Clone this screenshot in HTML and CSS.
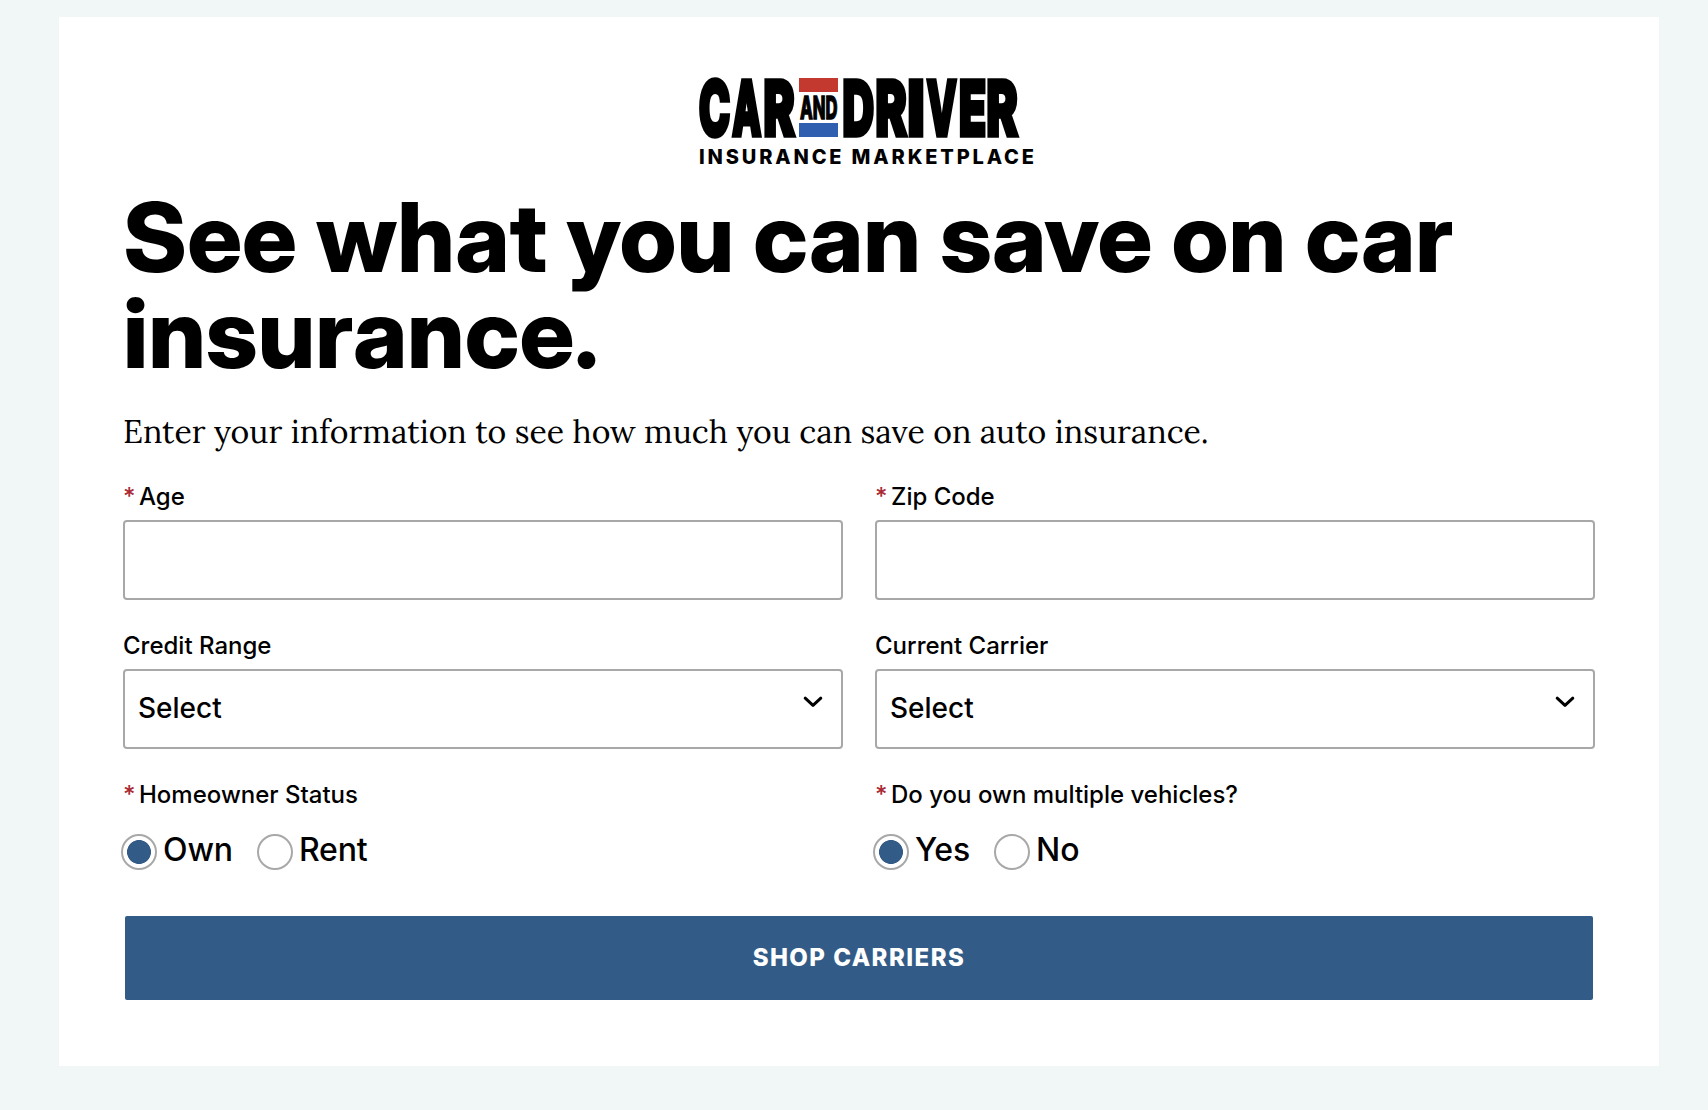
FILE: index.html
```html
<!DOCTYPE html>
<html lang="en">
<head>
<meta charset="utf-8">
<title>Car and Driver Insurance Marketplace</title>
<link rel="stylesheet" href="styles.css">
</head>
<body>
<main class="card">
  <svg class="logo" width="336" height="90" viewBox="0 0 336 90" role="img" aria-label="Car and Driver Insurance Marketplace">
    <g class="wordmark">
      <text x="0" y="57.500" textLength="31" lengthAdjust="spacingAndGlyphs">C</text>
      <text x="33.500" y="57.500" textLength="28.500" lengthAdjust="spacingAndGlyphs">A</text>
      <text x="64.500" y="57.500" textLength="31" lengthAdjust="spacingAndGlyphs">R</text>
      <text x="143.500" y="57.500" textLength="31.500" lengthAdjust="spacingAndGlyphs">D</text>
      <text x="176.500" y="57.500" textLength="31" lengthAdjust="spacingAndGlyphs">R</text>
      <text x="208.500" y="57.500" textLength="17" lengthAdjust="spacingAndGlyphs">I</text>
      <text x="228" y="57.500" textLength="29.500" lengthAdjust="spacingAndGlyphs">V</text>
      <text x="260" y="57.500" textLength="27" lengthAdjust="spacingAndGlyphs">E</text>
      <text x="287.500" y="57.500" textLength="31" lengthAdjust="spacingAndGlyphs">R</text>
    </g>
    <rect x="100" y="1" width="39" height="14" fill="#c4392f"/>
    <text class="and" x="101" y="42" textLength="37.500" lengthAdjust="spacingAndGlyphs">AND</text>
    <rect x="100" y="46" width="39" height="14" fill="#2f5fae"/>
    <text class="tagline" x="0" y="87" textLength="335">INSURANCE MARKETPLACE</text>
  </svg>
  <h1 class="title">See what you can save on car insurance.</h1>
  <p class="intro">Enter your information to see how much you can save on auto insurance.</p>
  <form class="form">
    <div class="field">
      <label class="label" for="age"><span class="req">*</span>Age</label>
      <input class="control" id="age" type="text">
    </div>
    <div class="field">
      <label class="label" for="zip"><span class="req">*</span>Zip Code</label>
      <input class="control" id="zip" type="text">
    </div>
    <div class="field">
      <span class="label">Credit Range</span>
      <div class="control select"><span>Select</span>
        <svg class="chevron" width="20" height="12" viewBox="0 0 20 12"><path d="M2.2 2.2 10 9.4 17.8 2.2"/></svg>
      </div>
    </div>
    <div class="field">
      <span class="label">Current Carrier</span>
      <div class="control select"><span>Select</span>
        <svg class="chevron" width="20" height="12" viewBox="0 0 20 12"><path d="M2.2 2.2 10 9.4 17.8 2.2"/></svg>
      </div>
    </div>
    <div class="field">
      <span class="label"><span class="req">*</span>Homeowner Status</span>
      <div class="options">
        <label class="option"><input class="radio" type="radio" name="home" checked><span>Own</span></label>
        <label class="option"><input class="radio" type="radio" name="home"><span>Rent</span></label>
      </div>
    </div>
    <div class="field">
      <span class="label"><span class="req">*</span>Do you own multiple vehicles?</span>
      <div class="options">
        <label class="option"><input class="radio" type="radio" name="multi" checked><span>Yes</span></label>
        <label class="option"><input class="radio" type="radio" name="multi"><span>No</span></label>
      </div>
    </div>
    <button class="submit" type="button">SHOP CARRIERS</button>
  </form>
</main>
</body>
</html>
```
FILE: styles.css
```css
* { box-sizing: border-box; }
body {
  margin: 0;
  padding: 17px 49px 44px 59px;
  background: #f1f7f7;
  color: #000;
  font-family: Inter, "Liberation Sans", sans-serif;
}
.card {
  display: flex;
  flex-direction: column;
  width: 1600px;
  height: 1049px;
  padding: 60px 64px 0;
  background: #fff;
}
.logo { display: block; margin-left: 576px; overflow: visible; }
.wordmark text {
  font-size: 74px;
  font-weight: 800;
  stroke: #000;
  stroke-width: 5.500px;
}
.and { font-size: 31px; font-weight: 800; stroke: #000; stroke-width: 1.400px; }
.tagline { font-size: 20px; font-weight: 800; }
.title {
  margin: 22px 0 0;
  font-family: "Inter Display", Inter, sans-serif;
  font-size: 96px;
  line-height: 96px;
  font-weight: 800;
}
.intro {
  margin: 31px 0 0;
  font-family: Lora, "Liberation Serif", serif;
  font-size: 32px;
  line-height: 40px;
  white-space: nowrap;
}
.form {
  display: grid;
  grid-template-columns: 1fr 1fr;
  column-gap: 32px;
  margin-top: 30px;
}
.field { height: 149px; }
.label {
  display: block;
  margin-bottom: 9px;
  font-size: 24px;
  line-height: 29px;
  font-weight: 500;
}
.req { display: inline-block; width: 16px; color: #a92a34; }
.control {
  display: block;
  width: 100%;
  height: 80px;
  border: 2px solid #a8a8a8;
  border-radius: 4px;
  background: #fff;
}
.select {
  display: flex;
  justify-content: space-between;
  padding: 20px 18px 0 13px;
  font-size: 28px;
  line-height: 34px;
  font-weight: 500;
}
.chevron { margin-top: 5px; fill: none; stroke: #000; stroke-width: 3px; stroke-linecap: round; stroke-linejoin: round; }
.options { display: flex; gap: 24px; margin: 25px 0 0 -2px; }
.option {
  display: flex;
  gap: 6px;
  font-size: 32px;
  line-height: 32px;
  font-weight: 500;
  letter-spacing: -.15px;
}
.radio {
  appearance: none;
  width: 36px;
  height: 36px;
  margin: 0;
  border: 2px solid #a8a8a8;
  border-radius: 50%;
  background: #fff;
}
.radio:checked { background: radial-gradient(circle, #325c87 11.6px, #fff 12.3px); }
.submit {
  grid-column: 1 / -1;
  height: 84px;
  margin: -13px 2px 0;
  padding: 0 0 2px;
  border: 0;
  border-radius: 2px;
  background: #325c87;
  color: #fff;
  font: 800 24px/29px Inter, sans-serif;
  letter-spacing: 1.450px;
}
```
